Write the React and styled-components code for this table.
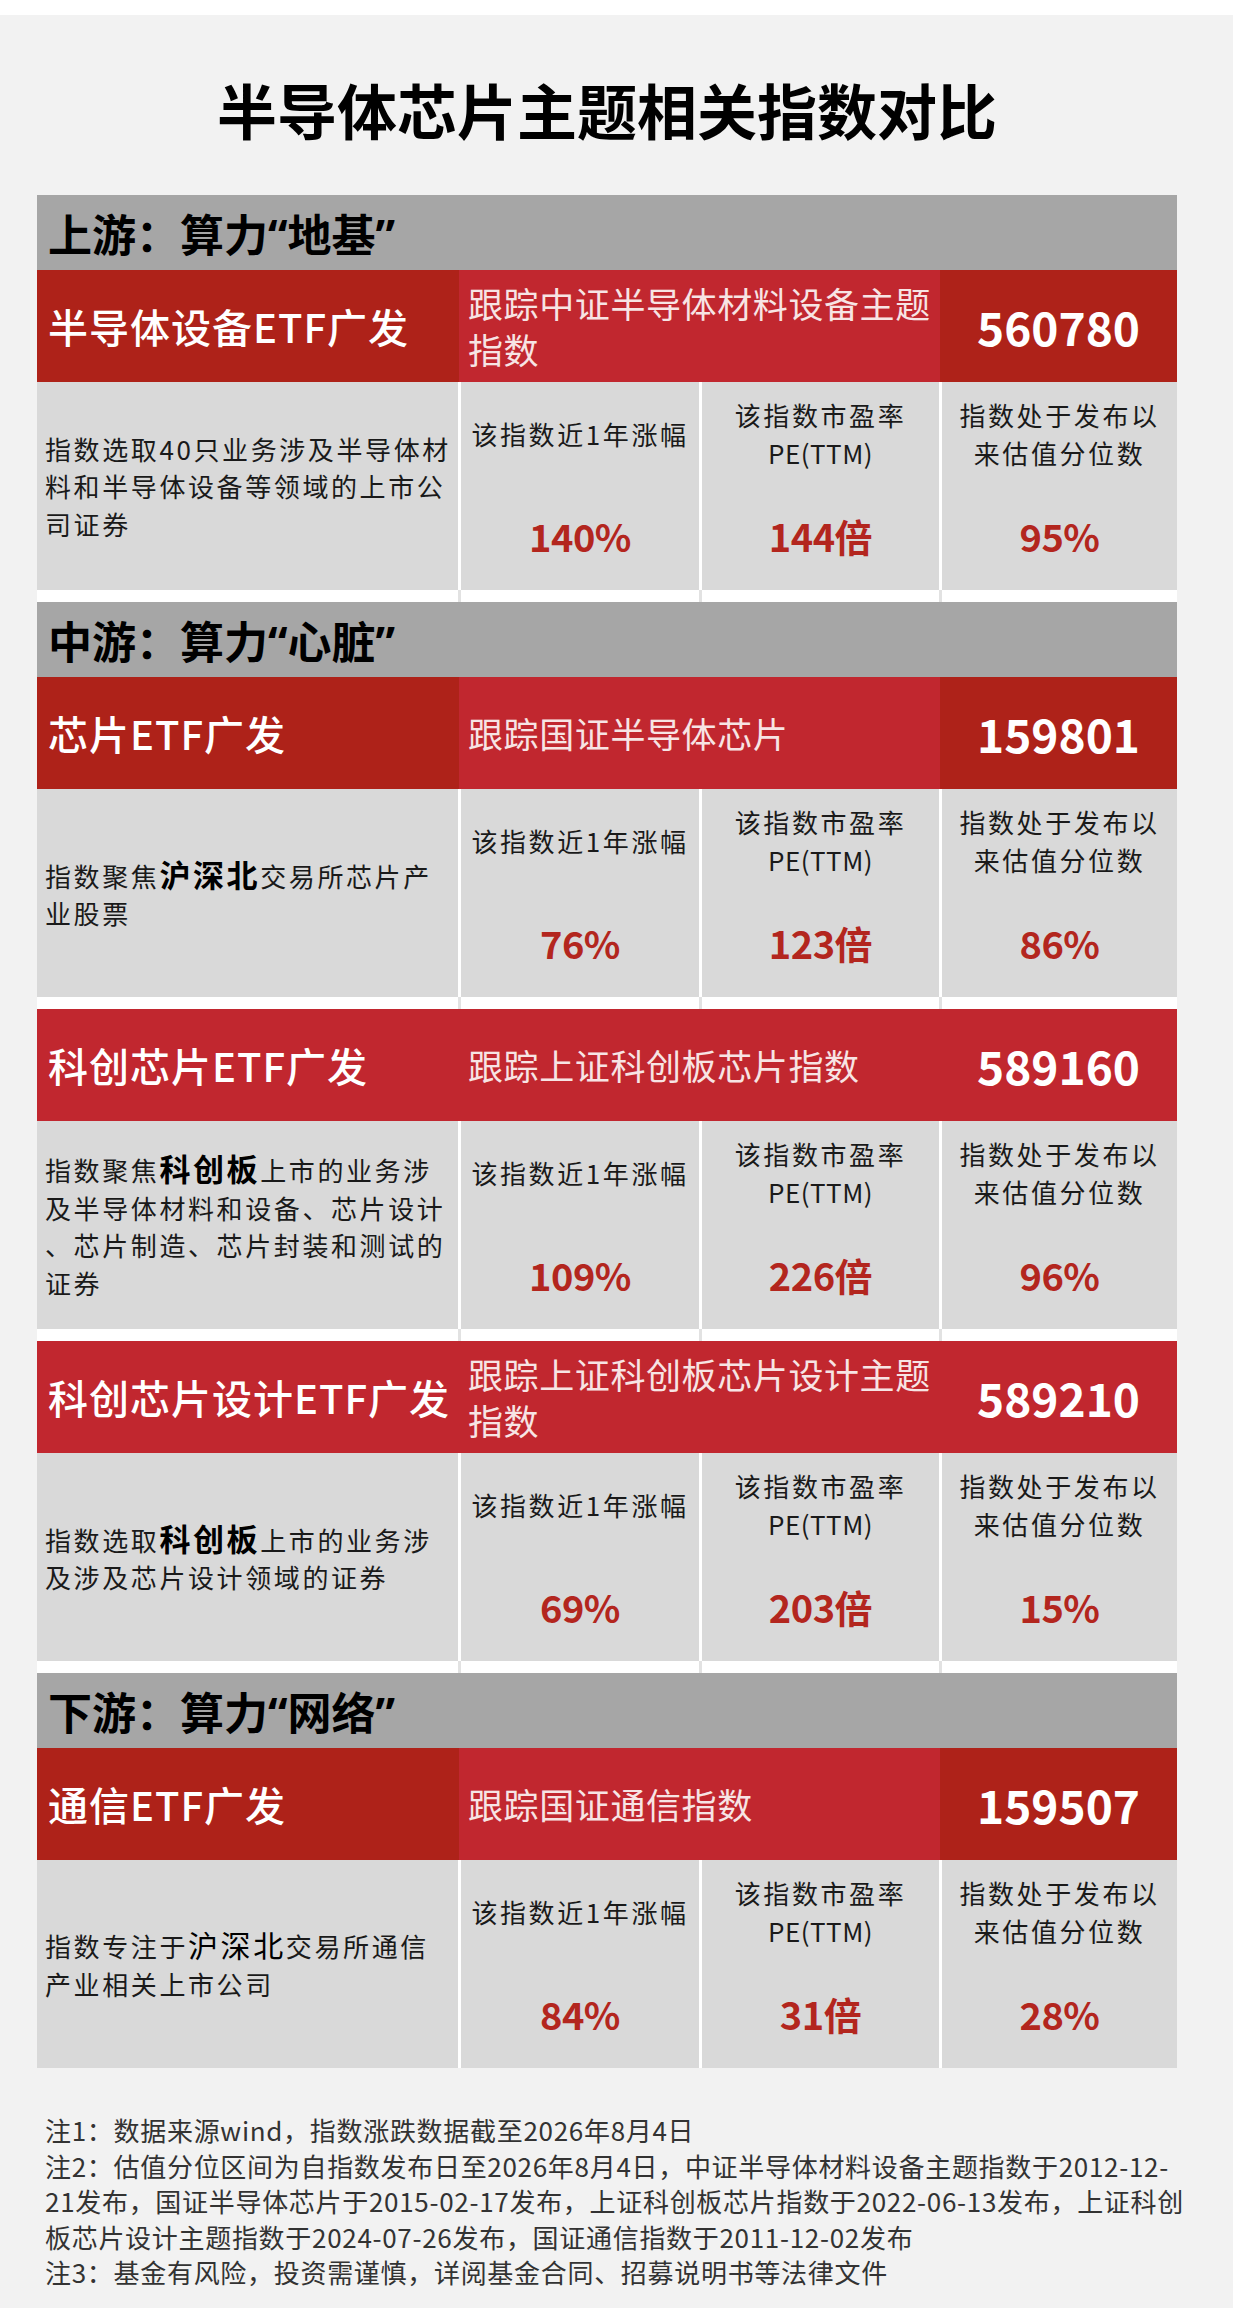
import React from "react";
import styled, { createGlobalStyle } from "styled-components";

const GlobalStyle = createGlobalStyle`
  html, body {
    margin: 0;
    padding: 0;
    background: #f2f2f2;
  }
  body {
    font-family: "Noto Sans CJK SC", "Noto Sans", sans-serif;
    color: #1a1a1a;
  }
`;

const Page = styled.div`
  min-height: 2308px;
  background: #f2f2f2;
`;

const TopBand = styled.div`
  height: 15px;
  background: #ffffff;
`;

const Main = styled.main`
  width: 1140px;
  margin-left: 37px;
`;

const Title = styled.h1`
  margin: 0;
  padding: 64px 0 56px;
  font-size: 60px;
  line-height: 60px;
  font-weight: 700;
  text-align: center;
  color: #000;
`;

const Table = styled.div`
  display: flex;
  flex-direction: column;
`;

const StageHeader = styled.div`
  height: 75px;
  display: flex;
  align-items: center;
  padding-left: 11px;
  background: #a6a6a6;
  font-family: "Noto Sans", "Noto Sans CJK SC", sans-serif;
  font-size: 44px;
  font-weight: 700;
  color: #000;
`;

const RED_DARK = "#ae2219";
const RED_LIGHT = "#c1272f";

const FundRow = styled.div`
  height: 112px;
  display: grid;
  grid-template-columns: 422px 481px 1fr;
`;

const FundCell = styled.div`
  display: flex;
  align-items: center;
  background: ${(p) => (p.$dark ? RED_DARK : RED_LIGHT)};
  color: #fff;
`;

const FundName = styled(FundCell)`
  padding-left: 11px;
  font-size: 40px;
  font-weight: 500;
  letter-spacing: 1px;
  white-space: nowrap;
`;

const TrackText = styled(FundCell)`
  padding: 0 8px 0 9px;
  font-size: 35px;
  line-height: 46px;
  letter-spacing: 0.6px;
  color: #f7e4e4;
`;

const Code = styled(FundCell)`
  justify-content: center;
  font-size: 46px;
  font-weight: 700;
`;

const COLS = "421px 238px 237px 235px";

const InfoRow = styled.div`
  height: 208px;
  display: grid;
  grid-template-columns: ${COLS};
  column-gap: 3px;
  background: #ffffff;
`;

const Desc = styled.div`
  display: flex;
  align-items: center;
  padding-left: 8px;
  background: #d9d9d9;
  font-size: 26px;
  line-height: 37.5px;
  letter-spacing: 2.6px;
  white-space: nowrap;
  color: #1a1a1a;
`;

const Emph = styled.span`
  font-size: ${(p) => (p.$bold ? "31px" : "30px")};
  font-weight: ${(p) => (p.$bold ? 700 : 400)};
  color: #000;
`;

const Metric = styled.div`
  display: grid;
  grid-template-rows: 1fr 1fr;
  background: #d9d9d9;
  text-align: center;
`;

const MetricLabel = styled.div`
  display: flex;
  flex-direction: column;
  justify-content: center;
  font-size: 26px;
  line-height: 38px;
  letter-spacing: 2.6px;
  white-space: nowrap;
  color: #1a1a1a;
`;

const LabelLine = styled.span`
  display: block;
  letter-spacing: ${(p) => (p.$latin ? "0.5px" : "2.6px")};
`;

const MetricValue = styled.div`
  display: flex;
  align-items: center;
  justify-content: center;
  padding-bottom: 6px;
  font-size: 38px;
  font-weight: 700;
  letter-spacing: -0.5px;
  color: #b3261e;
`;

const GapRow = styled.div`
  height: 12px;
  display: grid;
  grid-template-columns: ${COLS};
  column-gap: 3px;
  background: #e2e2e2;
`;

const GapCell = styled.div`
  background: #ffffff;
`;

const Notes = styled.div`
  margin-top: 44px;
  padding-left: 8px;
  font-size: 26px;
  line-height: 35.5px;
  letter-spacing: 0.7px;
  color: #333;
  white-space: nowrap;
`;

const NoteLine = styled.div``;

const LABELS = [
  [{ t: "该指数近1年涨幅" }],
  [{ t: "该指数市盈率" }, { t: "PE(TTM)", latin: true }],
  [{ t: "指数处于发布以" }, { t: "来估值分位数" }],
];

const sections = [
  {
    stage: "上游：算力“地基”",
    funds: [
      {
        name: "半导体设备ETF广发",
        track: "跟踪中证半导体材料设备主题指数",
        code: "560780",
        split: true,
        desc: [["指数选取40只业务涉及半导体材"], ["料和半导体设备等领域的上市公"], ["司证券"]],
        values: ["140%", "144倍", "95%"],
      },
    ],
  },
  {
    stage: "中游：算力“心脏”",
    funds: [
      {
        name: "芯片ETF广发",
        track: "跟踪国证半导体芯片",
        code: "159801",
        split: true,
        desc: [["指数聚焦", { b: "沪深北" }, "交易所芯片产"], ["业股票"]],
        values: ["76%", "123倍", "86%"],
      },
      {
        name: "科创芯片ETF广发",
        track: "跟踪上证科创板芯片指数",
        code: "589160",
        split: false,
        desc: [
          ["指数聚焦", { b: "科创板" }, "上市的业务涉"],
          ["及半导体材料和设备、芯片设计"],
          ["、芯片制造、芯片封装和测试的"],
          ["证券"],
        ],
        values: ["109%", "226倍", "96%"],
      },
      {
        name: "科创芯片设计ETF广发",
        track: "跟踪上证科创板芯片设计主题指数",
        code: "589210",
        split: false,
        desc: [["指数选取", { b: "科创板" }, "上市的业务涉"], ["及涉及芯片设计领域的证券"]],
        values: ["69%", "203倍", "15%"],
      },
    ],
  },
  {
    stage: "下游：算力“网络”",
    funds: [
      {
        name: "通信ETF广发",
        track: "跟踪国证通信指数",
        code: "159507",
        split: true,
        desc: [["指数专注于", { big: "沪深北" }, "交易所通信"], ["产业相关上市公司"]],
        values: ["84%", "31倍", "28%"],
      },
    ],
  },
];

const notes = [
  "注1：数据来源wind，指数涨跌数据截至2026年8月4日",
  "注2：估值分位区间为自指数发布日至2026年8月4日，中证半导体材料设备主题指数于2012-12-",
  "21发布，国证半导体芯片于2015-02-17发布，上证科创板芯片指数于2022-06-13发布，上证科创",
  "板芯片设计主题指数于2024-07-26发布，国证通信指数于2011-12-02发布",
  "注3：基金有风险，投资需谨慎，详阅基金合同、招募说明书等法律文件",
];

function renderSegment(seg, i) {
  if (typeof seg === "string") return <React.Fragment key={i}>{seg}</React.Fragment>;
  if (seg.b) return <Emph key={i} $bold>{seg.b}</Emph>;
  return <Emph key={i}>{seg.big}</Emph>;
}

function Description({ lines }) {
  return (
    <Desc>
      <div>
        {lines.map((line, li) => (
          <React.Fragment key={li}>
            {li > 0 && <br />}
            {line.map(renderSegment)}
          </React.Fragment>
        ))}
      </div>
    </Desc>
  );
}

function Fund({ fund, last }) {
  return (
    <>
      <FundRow>
        <FundName $dark={fund.split}>{fund.name}</FundName>
        <TrackText>{fund.track}</TrackText>
        <Code $dark={fund.split}>{fund.code}</Code>
      </FundRow>
      <InfoRow>
        <Description lines={fund.desc} />
        {LABELS.map((label, i) => (
          <Metric key={i}>
            <MetricLabel>
              {label.map((l, j) => (
                <LabelLine key={j} $latin={l.latin}>
                  {l.t}
                </LabelLine>
              ))}
            </MetricLabel>
            <MetricValue>{fund.values[i]}</MetricValue>
          </Metric>
        ))}
      </InfoRow>
      {!last && (
        <GapRow>
          <GapCell />
          <GapCell />
          <GapCell />
          <GapCell />
        </GapRow>
      )}
    </>
  );
}

export default function App() {
  const total = sections.reduce((n, s) => n + s.funds.length, 0);
  let idx = 0;
  return (
    <Page>
      <GlobalStyle />
      <TopBand />
      <Main>
        <Title>半导体芯片主题相关指数对比</Title>
        <Table>
          {sections.map((s) => (
            <React.Fragment key={s.stage}>
              <StageHeader>{s.stage}</StageHeader>
              {s.funds.map((f) => {
                idx += 1;
                return <Fund key={f.code} fund={f} last={idx === total} />;
              })}
            </React.Fragment>
          ))}
        </Table>
        <Notes>
          {notes.map((n) => (
            <NoteLine key={n}>{n}</NoteLine>
          ))}
        </Notes>
      </Main>
    </Page>
  );
}
